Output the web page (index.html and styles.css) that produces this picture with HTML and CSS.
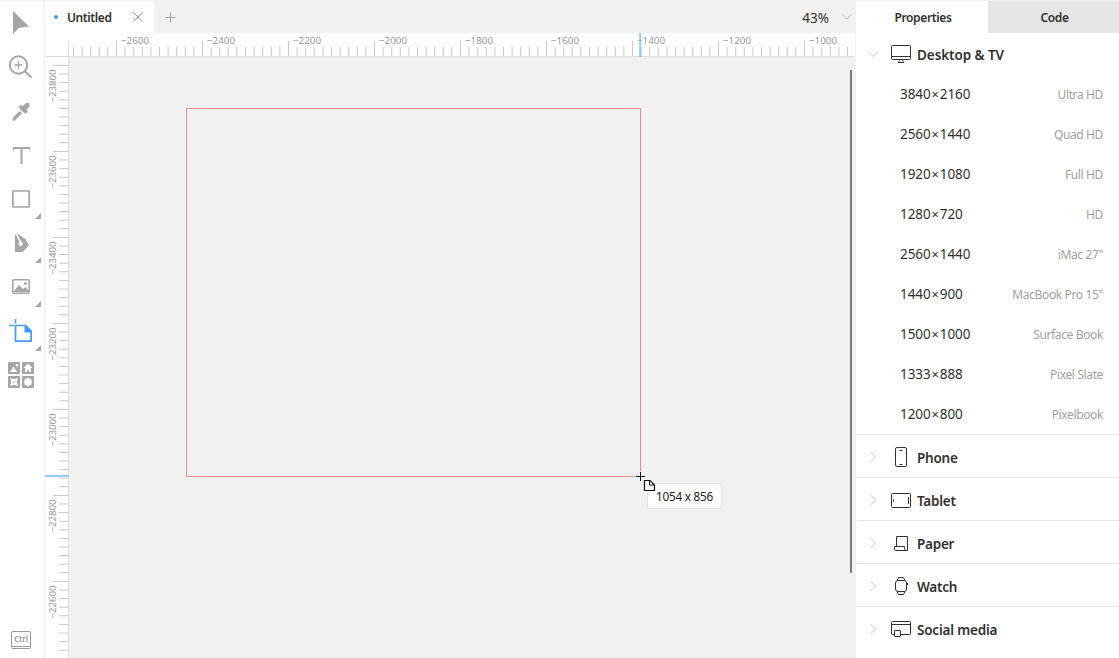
FILE: index.html
```html
<!DOCTYPE html>
<html lang="en">
<head>
<meta charset="utf-8">
<title>Untitled</title>
<link rel="stylesheet" href="styles.css">
</head>
<body>
<div class="app">
  <nav class="toolbar">
    <button class="tool"><svg viewBox="0 1 44 44"><path class="fill" d="M13 11 29 26.500 19 28 13 34z"/></svg></button>
    <button class="tool"><svg viewBox="0 1 44 44"><g class="line" stroke-width="2"><circle cx="18.500" cy="21" r="8.700"/><path stroke-width="2.200" d="M25 27.500 31.500 33.500"/><path stroke-width="1.300" d="M14.500 21h8M18.500 17v8"/></g></svg></button>
    <button class="tool"><svg viewBox="0 1 44 44"><path class="line" stroke-width="3.200" stroke-linecap="round" d="M14 31 20 25"/><path class="fill" d="m19 18.500 2-1.500 1.500 1 3-2.500c3-2 5.500.500 3.500 3.500l-2.500 3 1.500 1.500-2 2-2-.500-4-4z"/></svg></button>
    <button class="tool"><svg viewBox="0 0 44 44"><path class="fill" d="M13 14h17v3h-1v-1h-6.500v15h-2V16H14v1h-1z"/></svg></button>
    <button class="tool"><svg viewBox="0 0 44 44"><rect class="line" stroke-width="1.700" x="12.900" y="14" width="16.300" height="16" rx=".6"/><path class="fill" d="M41 36v6h-6z"/></svg></button>
    <button class="tool"><svg viewBox="0 0 44 44"><path class="fill" fill-rule="evenodd" d="M15 31V14l.5-1 4 8c-2 2-1 4 1 4 3 0 3-4 .500-4.500L16.500 12l9 6 3.500 6.500-6.500 6.500z"/><path class="fill" d="M41 36v6h-6z"/></svg></button>
    <button class="tool"><svg viewBox="0 0 44 44"><rect class="line" stroke-width="1.600" x="12.800" y="14.800" width="16.400" height="13.400" rx="1"/><path class="fill" d="m14 26 5-6 4 4 2.500-2 3.500 4v1H14z"/><circle class="fill" cx="25.500" cy="18.500" r="1.500"/><path class="fill" d="M41 36v6h-6z"/></svg></button>
    <button class="tool tool-active"><svg viewBox="0 0 44 44"><path class="line" stroke-width="1.700" stroke-linejoin="round" d="M15.500 16.500h10l5.600 5.500v10.200H15.500z"/><path class="fill" d="M24.500 16h1.500l5.500 5.500v2h-7z"/><path class="line" stroke-width="1.600" d="M9 16.500h5M15.500 10v4.500"/><path class="corner" d="M41 36v6h-6z"/></svg></button>
    <button class="tool"><svg viewBox="0 0 44 44"><g class="fill"><rect x="8" y="9" width="12" height="12" rx="1"/><rect x="22" y="9" width="12" height="12" rx="1"/><rect x="8" y="23" width="12" height="12" rx="1"/><rect x="22" y="23" width="12" height="12" rx="1"/></g><g fill="#fff"><path d="m10 19 3.500-5.500L17 19z"/><circle cx="17" cy="12.300" r="1.200"/><path d="m28 10.500 4.500 4.500h-1.500v4h-2v-2h-2v2h-2v-4h-1.500z"/><path fill-rule="evenodd" d="M10 25q4 2 8 0-2 4 0 8-4-2-8 0 2-4 0-8zm4 3-1 1 1 1 1-1z"/><path d="m28 24.500 1.500 1.300 1.800-.1-.1 1.800 1.300 1.500-1.300 1.500.1 1.800-1.800-.1L28 33.500l-1.500-1.300-1.800.1.100-1.800-1.300-1.500 1.300-1.500-.1-1.800 1.800.1z"/></g></svg></button>
    <div class="keycap"><span>Ctrl</span></div>
  </nav>

  <main class="workspace">
    <header class="tabs">
      <div class="tab">
        <i class="dot"></i><span class="tab-name">Untitled</span>
        <svg class="close" viewBox="0 0 12 12"><path d="M1.500 1.500l9 9M10.500 1.500l-9 9"/></svg>
      </div>
      <svg class="add" viewBox="0 0 12 12"><path d="M6.500 1.500v10M1.500 6.500h10"/></svg>
      <span class="zoom">43%</span>
      <svg class="zoom-arrow" viewBox="0 0 10 6"><path d="M.5.500 5 5 9.500.500"/></svg>
    </header>
    <svg class="ruler-x" id="rulerX" viewBox="45 33 810 24"></svg>
    <div class="stage">
      <svg class="ruler-y" id="rulerY" viewBox="45 57 24 601"></svg>
      <div class="canvas">
        <div class="artboard"></div>
        <div class="size-tip">1054 x 856</div>
        <svg class="cursor" viewBox="0 0 22 22"><path stroke="#f1f1f1" stroke-width="3" d="M5.500 0v11M0 5.500h11"/><path stroke="#111" d="M5.500 1v9M1 5.500h9"/><path fill="#fff" stroke="#111" stroke-width="1.200" d="M9.500 9.500h5.500l4.500 4.500v5.500h-10z"/><path fill="none" stroke="#111" d="M14.500 9.500v4.500h4.500"/></svg>
        <div class="scrollbar"></div>
      </div>
    </div>
  </main>

  <aside class="panel">
    <div class="panel-tabs"><div class="panel-tab">Properties</div><div class="panel-tab inactive">Code</div></div>
    <section class="group open">
      <svg class="chev" viewBox="0 0 12 12"><path d="M1 3.500 6 8.500l5-5"/></svg>
      <svg class="device" viewBox="0 0 22 22"><path d="M2.500 2.500h17q1 0 1 1v12q0 1-1 1h-17q-1 0-1-1v-12q0-1 1-1zM1.500 13.500h19M9.500 16.500c0 2-1 2-1.500 3h6c-.5-1-1.500-1-1.500-3"/></svg>
      <span class="group-name desk">Desktop &amp; TV</span>
    </section>
    <ul class="presets">
      <li><span>3840<i>×</i>2160</span><em>Ultra HD</em></li>
      <li><span>2560<i>×</i>1440</span><em>Quad HD</em></li>
      <li><span>1920<i>×</i>1080</span><em>Full HD</em></li>
      <li><span>1280<i>×</i>720</span><em>HD</em></li>
      <li><span>2560<i>×</i>1440</span><em>iMac 27"</em></li>
      <li><span>1440<i>×</i>900</span><em>MacBook Pro 15"</em></li>
      <li><span>1500<i>×</i>1000</span><em>Surface Book</em></li>
      <li><span>1333<i>×</i>888</span><em>Pixel Slate</em></li>
      <li><span>1200<i>×</i>800</span><em>Pixelbook</em></li>
    </ul>
    <section class="group">
      <svg class="chev" viewBox="0 0 12 12"><path d="m3.500 1 5 5-5 5"/></svg>
      <svg class="device" viewBox="0 0 22 22"><rect x="5.500" y="1.500" width="11" height="19" rx="1.500"/><path d="M9.500 4.500h3M9.500 18.500h3"/></svg>
      <span class="group-name">Phone</span>
    </section>
    <section class="group">
      <svg class="chev" viewBox="0 0 12 12"><path d="m3.500 1 5 5-5 5"/></svg>
      <svg class="device" viewBox="0 0 22 22"><rect x="1.500" y="4.500" width="19" height="14" rx="1"/><path d="M18.500 8v7M3.500 10.500v2"/></svg>
      <span class="group-name">Tablet</span>
    </section>
    <section class="group">
      <svg class="chev" viewBox="0 0 12 12"><path d="m3.500 1 5 5-5 5"/></svg>
      <svg class="device" viewBox="0 0 22 22"><path d="M6.500 14.500v-10h11v14h-12q-1 0-1-1.500v-2.500h10v2q0 2 1.500 2"/></svg>
      <span class="group-name">Paper</span>
    </section>
    <section class="group">
      <svg class="chev" viewBox="0 0 12 12"><path d="m3.500 1 5 5-5 5"/></svg>
      <svg class="device" viewBox="0 0 22 22"><rect x="5.500" y="5.500" width="11" height="11" rx="2.500"/><path d="M7 5.500q1-3 2-3h4q1 0 2 3M7 16.500q1 3 2 3h4q1 0 2-3M17.500 8v2"/></svg>
      <span class="group-name">Watch</span>
    </section>
    <section class="group">
      <svg class="chev" viewBox="0 0 12 12"><path d="m3.500 1 5 5-5 5"/></svg>
      <svg class="device" viewBox="0 0 22 22"><path d="M4.500 16.500h-2q-1 0-1-1v-11q0-1 1-1h17q1 0 1 1v11q0 1-1 1h-9M1.500 6.500h19"/><rect x="4.500" y="12.500" width="6" height="6" rx=".5"/></svg>
      <span class="group-name social">Social media</span>
    </section>
  </aside>
</div>
<script src="rulers.js"></script>
</body>
</html>
```

FILE: rulers.js
```js
// Each ruler unit of 200 covers 86px and holds ten ticks.
const step = 8.6;

let x = '<path class="ruler-edge" d="M45 56.500H855M68.500 41V57"/>';
for (let i = -5; 116.5 + i * step < 852; i++) {
  const p = (116.5 + i * step).toFixed(1);
  x += `<path class="tick" d="M${p} ${i % 10 === 0 ? 41 : 47}V56"/>`;
}
for (let i = 0; i < 9; i++) {
  x += `<text class="mark" x="${121 + i * 86}" y="44" textLength="28">−${2600 - i * 200}</text>`;
}
x += '<path class="guide" d="M640.200 33V57"/>';
document.getElementById('rulerX').innerHTML = x;

let y = '<path class="ruler-edge" d="M68.500 57V658"/>';
for (let i = 0; 65.4 + i * step < 658; i++) {
  const p = (65.4 + i * step).toFixed(1);
  y += `<path class="tick" d="M${i % 10 === 0 ? 53 : 59} ${p}H69"/>`;
}
for (let i = 0; i < 7; i++) {
  y += `<text class="mark" transform="translate(55.5 ${102.5 + i * 86}) rotate(-90)" textLength="33">−${23800 - i * 200}</text>`;
}
y += '<path class="guide" d="M45 476H69"/>';
document.getElementById('rulerY').innerHTML = y;
```

FILE: styles.css
```css
* { box-sizing: border-box; }
body { margin: 0; overflow: hidden; background: #f1f1f1; color: #323130; font-family: "Noto Sans", "Open Sans", sans-serif; }
svg { display: block; }
.app { display: flex; width: 1119px; height: 658px; padding-top: 1px; }

.toolbar { display: flex; flex-direction: column; width: 45px; background: #fff; border-right: 1px solid #eee; }
.tool { width: 44px; height: 44px; padding: 0; border: 0; background: none; color: #a6a6a6; }
.tool svg { width: 44px; height: 44px; }
.fill { fill: currentColor; }
.line { fill: none; stroke: currentColor; }
.corner { fill: #a6a6a6; }
.tool-active { color: #459bf0; }
.keycap { width: 20px; height: 18px; margin: auto 0 9px 11px; border: 1px solid #999; border-bottom: 3px double #999; border-radius: 2px; color: #999; font: 600 8px/14px "Noto Sans", sans-serif; text-align: center; }

.workspace { display: flex; flex-direction: column; width: 811px; }
.tabs { display: flex; align-items: center; height: 32px; }
.tab { display: flex; align-items: center; width: 109px; height: 32px; padding-left: 9px; background: #fff; }
.dot { width: 4px; height: 4px; border-radius: 50%; background: #459bf0; }
.tab-name { width: 65px; margin-left: 9px; padding-top: 1px; font-size: 12px; font-weight: 600; letter-spacing: -.4px; }
.close, .add { width: 12px; height: 12px; fill: none; stroke: #a0a0a0; }
.add { margin-left: 10px; }
.zoom { margin-left: auto; padding-top: 1px; font-size: 13.500px; letter-spacing: 0; }
.zoom-arrow { width: 10px; height: 6px; margin: 0 4px 0 13px; fill: none; stroke: #bbb; }
.ruler-x { width: 810px; height: 24px; background: #fff; }
.ruler-edge { fill: none; stroke: #dedede; }
.tick { stroke: #c9c9c9; }
.mark { fill: #999; font-size: 9.800px; }
.guide { stroke: #9ac8f5; stroke-width: 2; }
.stage { display: flex; height: 601px; }
.ruler-y { width: 24px; height: 601px; background: #fff; }
.canvas { position: relative; width: 787px; }
.artboard { position: absolute; left: 117px; top: 51px; width: 455px; height: 369px; border: 1px solid #f18b8b; }
.size-tip { position: absolute; left: 578px; top: 426px; width: 75px; height: 26px; border: 1px solid #e3e3e3; background: #fff; color: #222; font-size: 11.800px; line-height: 24px; text-align: center; letter-spacing: -.25px; }
.cursor { position: absolute; left: 566px; top: 414px; width: 22px; height: 22px; }
.scrollbar { position: absolute; left: 781px; top: 13px; width: 2px; height: 503px; background: #7d7d7d; }

.panel { width: 263px; background: #fff; }
.panel-tabs { display: flex; height: 32px; font-size: 12px; font-weight: 600; line-height: 34px; text-align: center; letter-spacing: -.35px; }
.panel-tab { width: 132px; padding-left: 2px; }
.panel-tab.inactive { width: 131px; background: #e5e5e5; }
.group { display: flex; align-items: center; height: 43px; margin-left: 1px; padding: 2px 0 0 10px; border-top: 1px solid #e4e4e4; }
.group:last-child { height: 52px; padding-bottom: 9px; }
.group.open { height: 41px; padding-top: 0; border: 0; }
.chev { width: 12px; height: 12px; fill: none; stroke: #c5c5c5; }
.device { width: 22px; height: 22px; margin-left: 11px; fill: none; stroke: #323130; }
.group-name { margin-left: 5px; padding-top: 2px; font-size: 13.500px; font-weight: 600; letter-spacing: -.24px; line-height: 20px; }
.group-name.desk { padding-top: 3px; letter-spacing: -.07px; }
.group-name.social { letter-spacing: -.2px; }
.presets { margin: 0; padding: 0; list-style: none; }
.presets li { display: flex; align-items: center; justify-content: space-between; height: 40px; padding: 0 16px 0 44px; font-size: 13.500px; letter-spacing: -.04px; }
.presets i { display: inline-block; width: 9px; font-size: 13px; font-style: normal; text-align: center; }
.presets em { padding-top: 1px; color: #a0a0a0; font-size: 12px; font-style: normal; letter-spacing: -.37px; }
```
